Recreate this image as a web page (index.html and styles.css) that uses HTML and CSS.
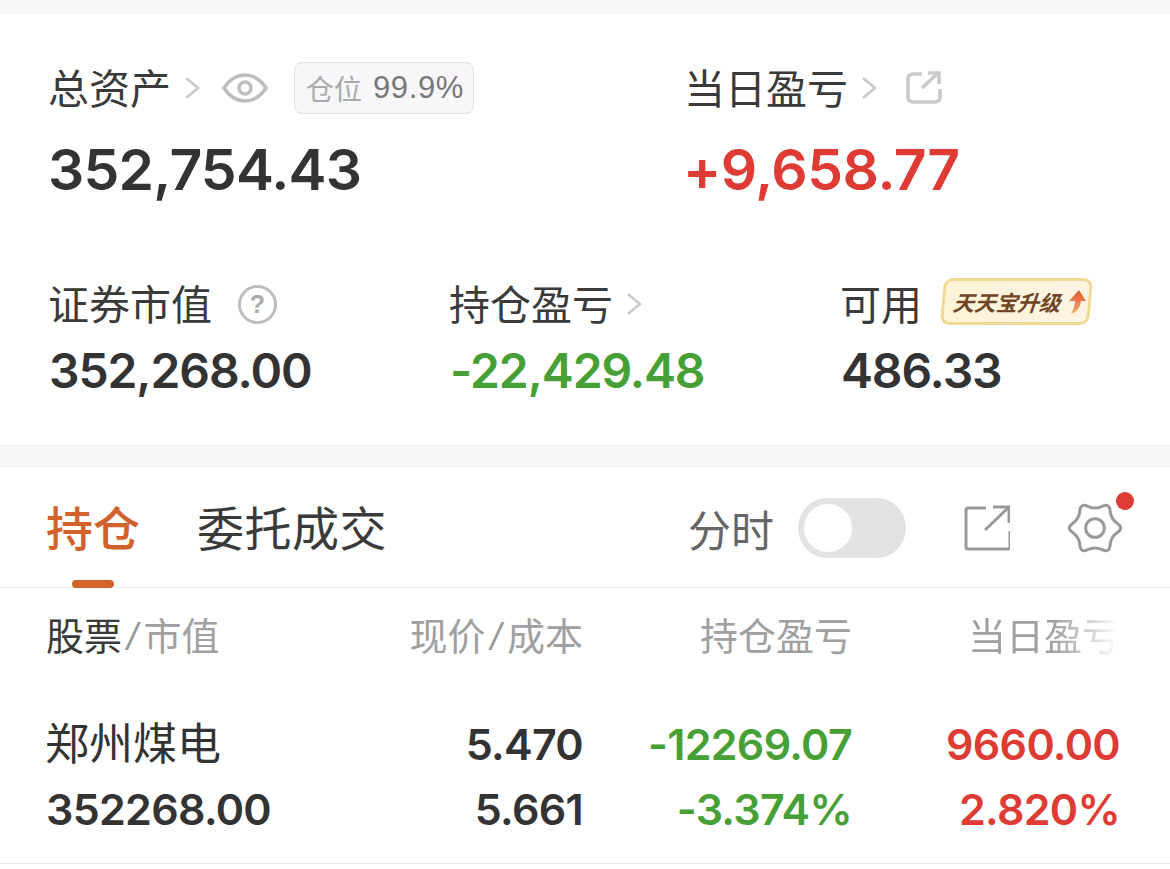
FILE: index.html
```html
<!DOCTYPE html>
<html lang="en">
<head>
    <meta charset="UTF-8">
    <meta name="viewport" content="width=device-width, initial-scale=1.0">
    <title>持仓</title>
    <link rel="stylesheet" href="styles.css">
</head>
<body>

    <div class="band band-top"></div>

    <section class="summary">
        <div class="summary-top">
            <div>
                <div class="label">
                    <span class="label-text">总资产</span>
                    <svg class="chevron" viewBox="0 0 18 28"><path d="M3 4l12 10L3 24"/></svg>
                    <svg class="eye" viewBox="0 0 46 32"><path d="M2 16C8 7 15 3 23 3s15 4 21 13c-6 9-13 13-21 13S8 25 2 16z"/><circle cx="23" cy="16" r="6"/></svg>
                    <span class="position"><span class="position-name">仓位</span> 99.9%</span>
                </div>
                <div class="value-big">352,754.43</div>
            </div>
            <div>
                <div class="label">
                    <span class="label-text">当日盈亏</span>
                    <svg class="chevron" viewBox="0 0 18 28"><path d="M3 4l12 10L3 24"/></svg>
                    <svg class="share-small" viewBox="0 0 36 34"><path d="M16 3H7Q2 3 2 8v18q0 5 5 5h22q5 0 5-5v-8M16 17L32 2M22 2h11v11"/></svg>
                </div>
                <div class="value-big red">+9,658.77</div>
            </div>
        </div>

        <div class="summary-bottom">
            <div>
                <div class="label">
                    <span class="label-text">证券市值</span>
                    <span class="help">?</span>
                </div>
                <div class="value-mid">352,268.00</div>
            </div>
            <div>
                <div class="label">
                    <span class="label-text">持仓盈亏</span>
                    <svg class="chevron" viewBox="0 0 18 28"><path d="M3 4l12 10L3 24"/></svg>
                </div>
                <div class="value-mid green">-22,429.48</div>
            </div>
            <div>
                <div class="label">
                    <span class="label-text">可用</span>
                    <span class="promo">
                        <span class="promo-text">天天宝升级</span>
                        <svg class="promo-arrow" viewBox="0 0 20 26">
                            <defs>
                                <linearGradient id="promo-fill" x1="0" y1="0" x2="0" y2="1">
                                    <stop offset="0" stop-color="#e2562e"/>
                                    <stop offset="1" stop-color="#f3b06c"/>
                                </linearGradient>
                            </defs>
                            <path fill="url(#promo-fill)" d="M11 1l8 11h-5c0 6-3 11-9 13 2-4 3-8 3-13H2z"/>
                        </svg>
                    </span>
                </div>
                <div class="value-mid">486.33</div>
            </div>
        </div>
    </section>

    <div class="band band-mid"></div>

    <section class="holdings">
        <div class="tabs">
            <span class="tab active">持仓</span>
            <span class="tab">委托成交</span>
            <div class="tools">
                <span class="tool-label">分时</span>
                <span class="toggle"><span class="knob"></span></span>
                <svg class="share" viewBox="0 0 46 46"><path d="M22 3H4Q2 3 2 5v37q0 2 2 2h40q2 0 2-2V26M21 25L44 3M29 2h16v16"/></svg>
                <span class="gear-wrap">
                    <svg class="gear" viewBox="0 0 60 60">
                        <path d="M53.950 25.120Q46.890 20.250 46.200 11.700Q45.500 3.150 37.750 6.820Q30 10.500 22.250 6.820Q14.500 3.150 13.800 11.700Q13.110 20.250 6.050 25.120Q-1 30 6.050 34.880Q13.110 39.750 13.800 48.300Q14.500 56.850 22.250 53.180Q30 49.500 37.750 53.180Q45.500 56.850 46.200 48.300Q46.890 39.750 53.950 34.880Q61 30 53.950 25.120Z"/>
                        <circle cx="30" cy="30" r="10"/>
                    </svg>
                    <span class="dot"></span>
                </span>
            </div>
        </div>

        <div class="table-head">
            <div><span class="dark">股票</span><i class="slash">/</i>市值</div>
            <div class="num">现价<i class="slash">/</i>成本</div>
            <div class="num">持仓盈亏</div>
            <div class="num fade">当日盈亏</div>
        </div>

        <div class="table-row">
            <div class="stock-name">郑州煤电</div>
            <div class="num">5.470</div>
            <div class="num green">-12269.07</div>
            <div class="num red">9660.00</div>
            <div>352268.00</div>
            <div class="num">5.661</div>
            <div class="num green">-3.374%</div>
            <div class="num red">2.820%</div>
        </div>
    </section>

</body>
</html>
```

FILE: styles.css
```css
body {
    margin: 0;
    background-color: #fff;
    color: #333;
    font-family: "Liberation Sans", "Noto Sans CJK SC", sans-serif;
}
svg {
    display: block;
    flex: none;
    fill: none;
}
.band {
    background-color: #f5f6f8;
}
.band-top {
    height: 14px;
}
.band-mid {
    height: 24px;
}
.red {
    color: #dd3b34;
}
.green {
    color: #46a035;
}

/* summary */
.summary {
    height: 430px;
    padding: 48px 0 0 50px;
    box-sizing: border-box;
}
.summary-top {
    display: grid;
    grid-template-columns: 636px 1fr;
}
.summary-bottom {
    display: grid;
    grid-template-columns: 401px 391px 1fr;
    margin-top: 77px;
}
.label {
    display: flex;
    align-items: center;
    height: 52px;
    margin-left: -2px;
    font-size: 41px;
    color: #3a3a3a;
}
.label-text {
    margin-bottom: 5px;
}
.value-big {
    height: 62px;
    margin: 25px 0 0 -2px;
    font-family: Inter, "Liberation Sans", sans-serif;
    font-size: 57px;
    line-height: 62px;
    font-weight: 600;
    letter-spacing: -0.800px;
}
.value-big.red {
    margin-left: -3px;
    letter-spacing: -0.500px;
}
.value-mid {
    height: 56px;
    margin: 13px 0 0 -1px;
    font-family: Inter, "Liberation Sans", sans-serif;
    font-size: 48px;
    line-height: 56px;
    font-weight: 600;
    letter-spacing: -1.100px;
}
.chevron {
    width: 18px;
    height: 28px;
    margin-left: 12px;
    stroke: #c9c9c9;
    stroke-width: 2.500;
}
.eye {
    width: 46px;
    height: 32px;
    margin-left: 21px;
    stroke: #bdbdbd;
    stroke-width: 3.500;
}
.position {
    display: flex;
    align-items: center;
    gap: 11px;
    height: 52px;
    margin-left: 26px;
    padding: 0 9px 0 11px;
    box-sizing: border-box;
    border: 1.500px solid #e2e2e4;
    border-radius: 8px;
    background-color: #f7f7f9;
    font-size: 31px;
    letter-spacing: 0.600px;
    color: #777;
}
.position-name {
    font-size: 28px;
    letter-spacing: 0;
    color: #aaa;
}
.share-small {
    width: 36px;
    height: 34px;
    margin-left: 28px;
    stroke: #c9c9c9;
    stroke-width: 3.500;
}
.help {
    display: flex;
    align-items: center;
    justify-content: center;
    width: 39px;
    height: 39px;
    margin-left: 26px;
    box-sizing: border-box;
    border: 3px solid #bdbdbd;
    border-radius: 50%;
    font-size: 25px;
    font-weight: bold;
    color: #aaa;
}
.promo {
    display: flex;
    align-items: center;
    gap: 6px;
    width: 149px;
    height: 47px;
    margin: 0 0 5px 20px;
    padding-left: 8px;
    box-sizing: border-box;
    border: 3px solid #f0d895;
    border-radius: 9px;
    background: linear-gradient(90deg, #fdf3d6, #fdf5e2);
    transform: skewX(-5deg);
}
.promo-text {
    font-size: 21.500px;
    font-weight: bold;
    font-style: italic;
    color: #6f4526;
}
.promo-arrow {
    width: 20px;
    height: 26px;
}

/* tabs */
.tabs {
    display: flex;
    align-items: center;
    gap: 57px;
    height: 120px;
    padding: 0 47px 0 46px;
    box-sizing: border-box;
    border-bottom: 1px solid #e8e8e8;
}
.tab {
    position: relative;
    padding-bottom: 4px;
    font-size: 47px;
    letter-spacing: 0.500px;
    color: #3a3a3a;
}
.tab.active {
    letter-spacing: 0;
    font-weight: 500;
    color: #d2622c;
}
.tab.active::after {
    content: "";
    position: absolute;
    left: 26px;
    bottom: -24px;
    width: 42px;
    height: 8px;
    border-radius: 4px;
    background-color: #d2622c;
}
.tools {
    display: flex;
    align-items: center;
    margin-left: auto;
}
.tool-label {
    font-size: 43px;
    color: #666;
}
.toggle {
    display: flex;
    align-items: center;
    width: 108px;
    height: 60px;
    margin-left: 24px;
    padding-left: 6px;
    box-sizing: border-box;
    border-radius: 30px;
    background-color: #e3e3e5;
}
.knob {
    width: 48px;
    height: 48px;
    border-radius: 50%;
    background-color: #fff;
}
.share {
    width: 46px;
    height: 46px;
    margin-left: 58px;
    stroke: #999;
    stroke-width: 3;
}
.gear-wrap {
    position: relative;
    margin-left: 57px;
}
.gear {
    width: 56px;
    height: 56px;
    stroke: #999;
    stroke-width: 3.200;
}
.dot {
    position: absolute;
    top: -8px;
    right: -11px;
    width: 18px;
    height: 18px;
    border-radius: 50%;
    background-color: #dd3b34;
}

/* table */
.table-head,
.table-row {
    display: grid;
    grid-template-columns: 254px 283px 269px 1fr;
    padding: 0 50px 0 46px;
}
.table-head {
    padding-top: 24px;
    font-size: 38px;
    line-height: 50px;
    color: #a0a0a0;
}
.dark {
    color: #3a3a3a;
}
.slash {
    margin: 0 6px 0 5px;
    color: #999;
}
.num {
    text-align: right;
    white-space: nowrap;
}
.fade {
    -webkit-mask-image: linear-gradient(90deg, #000 75%, transparent 100%);
    mask-image: linear-gradient(90deg, #000 75%, transparent 100%);
}
.table-row {
    height: 202px;
    box-sizing: border-box;
    padding-top: 50px;
    border-bottom: 1px solid #e8e8e8;
    align-content: start;
    font-family: Inter, "Liberation Sans", sans-serif;
    font-size: 43px;
    line-height: 65px;
    font-weight: 600;
    letter-spacing: -0.700px;
    color: #333;
}
.stock-name {
    margin-left: -1px;
    font-family: "Liberation Sans", "Noto Sans CJK SC", sans-serif;
    font-size: 44px;
    font-weight: normal;
    letter-spacing: 0;
}
```
